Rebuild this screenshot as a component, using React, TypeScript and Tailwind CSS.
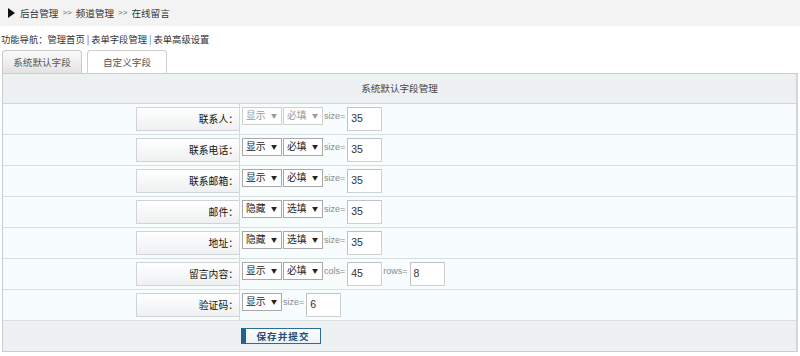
import React from "react";

const cjk = "font-['Noto_Sans_CJK_SC','Noto_Sans',sans-serif]";
const lat = "font-['Liberation_Sans',Arial,sans-serif]";

function Sel({ text, disabled }: { text: string; disabled?: boolean }) {
  return (
    <div
      className={`w-[40px] h-[18px] border bg-white flex items-center justify-between pl-[3px] pr-[4px] ${
        disabled ? "border-[#cfcfcf] text-[#9a9a9a]" : "border-[#a9a9a9] text-[#222]"
      }`}
    >
      <span className="leading-none text-[9.8px]">{text}</span>
      <span className="text-[6px] leading-none">▼</span>
    </div>
  );
}

function Lbl({ t }: { t: string }) {
  return (
    <span className={`${lat} text-[9px] text-[#8a8a8a] h-[20px] flex items-center`}>{t}</span>
  );
}

function Inp({ v }: { v: string }) {
  return (
    <div
      className={`w-[35px] h-[24px] border border-[#cdd1d4] border-t-[#bfc3c6] border-l-[#bfc3c6] bg-white flex items-center pl-[3px] ml-[1px] ${lat} text-[10.5px] text-[#333]`}
    >
      {v}
    </div>
  );
}

type Row = { label: string; kind: "std" | "content" | "code"; a?: string; b?: string; dis?: boolean; v?: string };

const rows: Row[] = [
  { label: "联系人：", kind: "std", a: "显示", b: "必填", dis: true, v: "35" },
  { label: "联系电话：", kind: "std", a: "显示", b: "必填", v: "35" },
  { label: "联系邮箱：", kind: "std", a: "显示", b: "必填", v: "35" },
  { label: "邮件：", kind: "std", a: "隐藏", b: "选填", v: "35" },
  { label: "地址：", kind: "std", a: "隐藏", b: "选填", v: "35" },
  { label: "留言内容：", kind: "content", a: "显示", b: "必填" },
  { label: "验证码：", kind: "code", a: "显示", v: "6" },
];

export default function App() {
  return (
    <div className={`w-[800px] h-[356px] bg-white ${cjk} text-[9.6px] text-[#333] overflow-hidden`}>
      {/* breadcrumb */}
      <div className="h-[26px] bg-[#f3f3f3] flex items-center pl-[8px]">
        <svg width="7" height="10" viewBox="0 0 7 10" className="mr-[5px]">
          <polygon points="0,0 7,5 0,10" fill="#111" />
        </svg>
        <span>后台管理</span>
        <span className={`${lat} text-[8px] text-[#666] mx-[4px]`}>&gt;&gt;</span>
        <span>频道管理</span>
        <span className={`${lat} text-[8px] text-[#666] mx-[4px]`}>&gt;&gt;</span>
        <span>在线留言</span>
      </div>
      {/* nav */}
      <div className="h-[24px] flex items-center pl-[1px] pt-[3px] text-[9.3px]">
        <span>功能导航：管理首页</span>
        <span className="mx-[2px] text-[#555]">|</span>
        <span>表单字段管理</span>
        <span className="mx-[2px] text-[#3a7dbd]">|</span>
        <span>表单高级设置</span>
      </div>
      {/* tabs */}
      <div className="h-[23px] flex items-end pl-[2px] gap-[5px]">
        <div className="w-[80px] h-[23px] border border-b-0 border-[#c9c9c9] rounded-t-[4px] bg-gradient-to-b from-[#fbfbfb] to-[#e3e3e3] flex items-center justify-center text-[#555]">
          系统默认字段
        </div>
        <div className="w-[80px] h-[23px] border border-b-0 border-[#cfcfcf] rounded-t-[4px] bg-white flex items-center justify-center text-[#555]">
          自定义字段
        </div>
      </div>
      {/* table */}
      <div className="ml-[2px] w-[796px] border border-[#c9ced1] border-r-[2px] border-r-[#d3d7d9]">
        <div className="h-[30px] bg-[#eef1f2] border-b border-[#d0d5d8] flex items-center justify-center text-[#444]">
          系统默认字段管理
        </div>
        {rows.map((r, i) => (
          <div key={i} className="h-[31px] bg-[#f7fcfd] border-b border-[#d9dfe1] flex">
            <div className="w-[133px] shrink-0" />
            <div className="w-[104px] shrink-0 border-r border-[#d3d8db] pt-[3px]">
              <div className="h-[24px] border-l border-t border-b border-[#cfd3d6] bg-gradient-to-b from-white to-[#eef0f1] flex items-center justify-end pr-[1px] text-[#111] text-[9.8px]">
                {r.label}
              </div>
            </div>
            <div className="pl-[2px] pt-[3px] flex items-start gap-[1px]">
              <Sel text={r.a!} disabled={r.dis} />
              {r.kind !== "code" && <Sel text={r.b!} disabled={r.dis} />}
              {r.kind === "std" && (
                <>
                  <Lbl t="size=" />
                  <Inp v={r.v!} />
                </>
              )}
              {r.kind === "content" && (
                <>
                  <Lbl t="cols=" />
                  <Inp v="45" />
                  <Lbl t="rows=" />
                  <Inp v="8" />
                </>
              )}
              {r.kind === "code" && (
                <>
                  <Lbl t="size=" />
                  <Inp v={r.v!} />
                </>
              )}
            </div>
          </div>
        ))}
        <div className="h-[30px] bg-[#edf1f2] flex items-center pl-[238px]">
          <div className="w-[80px] h-[16px] border border-[#2f6b98] border-l-[5px] border-l-[#22608f] bg-gradient-to-b from-white to-[#eaf2f7] flex items-center justify-center text-[#1f4f78] font-bold tracking-[1px]">
            保存并提交
          </div>
        </div>
      </div>
    </div>
  );
}
